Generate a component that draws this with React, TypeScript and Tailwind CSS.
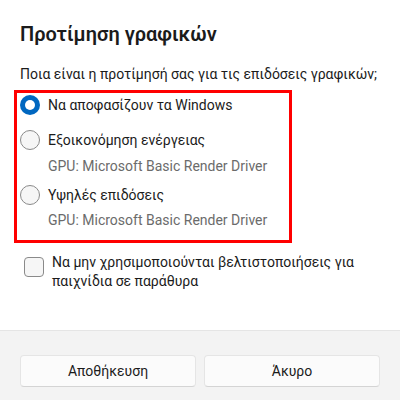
import React from 'react';

const Radio = ({ checked }: { checked?: boolean }) =>
	checked ? (
		<div className="w-5 h-5 rounded-full bg-[#0067c0] flex items-center justify-center shrink-0">
			<div className="w-[10px] h-[10px] rounded-full bg-white"></div>
		</div>
	) : (
		<div className="w-5 h-5 rounded-full border border-[#8a8a8a] bg-[#f6f6f6] shrink-0"></div>
	);

export default function App() {
	return (
		<div
			className="w-[400px] h-[400px] bg-white flex flex-col text-[#1b1b1b]"
			style={{ fontFamily: 'Roboto, "Noto Sans", sans-serif' }}>
			<div className="flex-1 px-5 pt-5">
				<h1 className="text-[20px] leading-7 font-semibold">Προτίμηση γραφικών</h1>
				<p className="mt-4 text-[14px] leading-5 whitespace-nowrap">
					Ποια είναι η προτίμησή σας για τις επιδόσεις γραφικών;
				</p>
				<div className="mt-[6px] -ml-[6px] w-[278px] border-[3px] border-[#ff0000] pl-[3px] pb-[10px] text-[14px] leading-5">
					<div className="flex items-center gap-2 h-6">
						<Radio checked />
						<span>Να αποφασίζουν τα Windows</span>
					</div>
					<div className="flex items-center gap-2 h-6 mt-[11px]">
						<Radio />
						<span>Εξοικονόμηση ενέργειας</span>
					</div>
					<div className="pl-7 mt-[4px] text-[#6b6b6b]">GPU: Microsoft Basic Render Driver</div>
					<div className="flex items-center gap-2 h-6 mt-[7px]">
						<Radio />
						<span>Υψηλές επιδόσεις</span>
					</div>
					<div className="pl-7 mt-[3px] text-[#6b6b6b]">GPU: Microsoft Basic Render Driver</div>
				</div>
				<div className="flex gap-2 mt-[10px] pl-1 text-[14px] leading-[19px]">
					<div className="w-5 h-5 rounded-[4px] border border-[#8a8a8a] bg-[#f6f6f6] shrink-0 mt-[4px]"></div>
					<span>Να μην χρησιμοποιούνται βελτιστοποιήσεις για παιχνίδια σε παράθυρα</span>
				</div>
			</div>
			<div className="h-[70px] bg-[#f3f3f3] border-t border-[#e5e5e5] px-5 pt-6 flex gap-2">
				<button className="flex-1 h-8 rounded-[4px] bg-[#fbfbfb] border border-[#e5e5e5] border-b-[#d4d4d4] text-[14px]">
					Αποθήκευση
				</button>
				<button className="flex-1 h-8 rounded-[4px] bg-[#fbfbfb] border border-[#e5e5e5] border-b-[#d4d4d4] text-[14px]">
					Άκυρο
				</button>
			</div>
		</div>
	);
}
